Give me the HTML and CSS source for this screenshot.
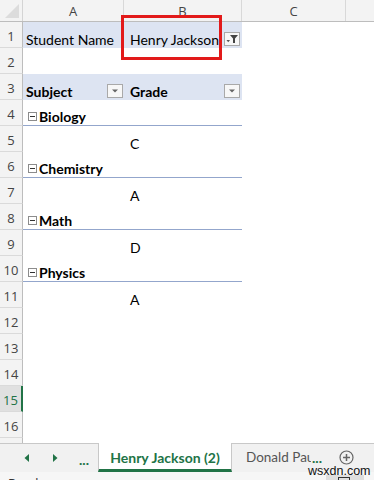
FILE: index.html
```html
<!DOCTYPE html>
<html>
<head>
<meta charset="utf-8">
<link rel="stylesheet" href="styles.css">
</head>
<body>
<div class="app">
  <div class="grid">
    <div class="row colhead">
      <div class="corner"><span class="tri"></span></div>
      <div class="ch">A</div>
      <div class="ch">B</div>
      <div class="ch">C</div>
      <div class="ch last"></div>
    </div>

    <div class="row">
      <div class="rh">1</div>
      <div class="c pv a">Student Name</div>
      <div class="c pv b">Henry Jackson
        <span class="fbtn"><svg width="14" height="12" viewBox="0 0 14 12"><polygon points="1.5,7 5,7 3.25,9.2" fill="#555"/><polygon points="5,2 13,2 10,5.5 10,10 8,10 8,5.5" fill="#444"/></svg></span>
      </div>
      <div class="c"></div><div class="c"></div>
    </div>

    <div class="row">
      <div class="rh">2</div>
      <div class="c"></div><div class="c"></div><div class="c"></div><div class="c"></div>
    </div>

    <div class="row">
      <div class="rh">3</div>
      <div class="c pv a bold">Subject
        <span class="fbtn"><svg width="14" height="12" viewBox="0 0 14 12"><polygon points="4,4.5 10,4.5 7,7.5" fill="#666"/></svg></span>
      </div>
      <div class="c pv b bold">Grade
        <span class="fbtn"><svg width="14" height="12" viewBox="0 0 14 12"><polygon points="4,4.5 10,4.5 7,7.5" fill="#666"/></svg></span>
      </div>
      <div class="c"></div><div class="c"></div>
    </div>

    <div class="row">
      <div class="rh">4</div>
      <div class="c item a bold"><span class="minus"></span>Biology</div>
      <div class="c item"></div>
      <div class="c"></div><div class="c"></div>
    </div>
    <div class="row">
      <div class="rh">5</div>
      <div class="c"></div><div class="c b">C</div><div class="c"></div><div class="c"></div>
    </div>

    <div class="row">
      <div class="rh">6</div>
      <div class="c item a bold"><span class="minus"></span>Chemistry</div>
      <div class="c item"></div>
      <div class="c"></div><div class="c"></div>
    </div>
    <div class="row">
      <div class="rh">7</div>
      <div class="c"></div><div class="c b">A</div><div class="c"></div><div class="c"></div>
    </div>

    <div class="row">
      <div class="rh">8</div>
      <div class="c item a bold"><span class="minus"></span>Math</div>
      <div class="c item"></div>
      <div class="c"></div><div class="c"></div>
    </div>
    <div class="row">
      <div class="rh">9</div>
      <div class="c"></div><div class="c b">D</div><div class="c"></div><div class="c"></div>
    </div>

    <div class="row">
      <div class="rh">10</div>
      <div class="c item a bold"><span class="minus"></span>Physics</div>
      <div class="c item"></div>
      <div class="c"></div><div class="c"></div>
    </div>
    <div class="row">
      <div class="rh">11</div>
      <div class="c"></div><div class="c b">A</div><div class="c"></div><div class="c"></div>
    </div>

    <div class="row"><div class="rh">12</div><div class="c"></div><div class="c"></div><div class="c"></div><div class="c"></div></div>
    <div class="row"><div class="rh">13</div><div class="c"></div><div class="c"></div><div class="c"></div><div class="c"></div></div>
    <div class="row"><div class="rh">14</div><div class="c"></div><div class="c"></div><div class="c"></div><div class="c"></div></div>
    <div class="row"><div class="rh sel">15</div><div class="c"></div><div class="c"></div><div class="c"></div><div class="c"></div></div>
    <div class="row"><div class="rh">16</div><div class="c"></div><div class="c"></div><div class="c"></div><div class="c"></div></div>
    <div class="row"><div class="rh">17</div><div class="c"></div><div class="c"></div><div class="c"></div><div class="c"></div></div>
  </div>

  <div class="tabs">
    <div class="nav">
      <svg width="8" height="10" viewBox="0 0 8 10" class="arr"><polygon points="6,1 6,9 1.5,5" fill="#217346"/></svg>
      <svg width="8" height="10" viewBox="0 0 8 10" class="arr"><polygon points="2,1 2,9 6.5,5" fill="#217346"/></svg>
      <span class="dots">...</span>
    </div>
    <div class="tab active">Henry Jackson (2)</div>
    <div class="tab other">Donald Paul</div>
    <span class="dots2">...</span>
    <span class="plus"><svg width="15" height="15" viewBox="0 0 15 15"><circle cx="7.5" cy="7.5" r="6.5" fill="none" stroke="#666" stroke-width="1.2"/><path d="M7.5 4v7M4 7.5h7" stroke="#666" stroke-width="1.5"/></svg></span>
  </div>
  <div class="status"><span class="ready">Ready</span><span class="sbox"><span class="sicon"></span></span></div>

  <div class="redbox"></div>
  <div class="watermark">wsxdn.com</div>
</div>
</body>
</html>
```

FILE: styles.css
```css
* { box-sizing: border-box; }
html, body { margin: 0; padding: 0; background: #fff; }
.app {
  position: relative;
  width: 374px;
  height: 480px;
  overflow: hidden;
  font-family: Lato, "Open Sans", sans-serif;
  color: #000;
}
.grid {
  height: 443px;
  overflow: hidden;
}
.row {
  display: grid;
  grid-template-columns: 23px 101px 118px 104px 1fr;
  height: 26px;
}
.colhead {
  height: 22px;
  background: #f3f3f3;
  border-bottom: 1px solid #bdbdbd;
}
.corner {
  position: relative;
  border-right: 1px solid #d4d4d4;
}
.tri {
  position: absolute;
  right: 3px;
  bottom: 3px;
  width: 0;
  height: 0;
  border-left: 14px solid transparent;
  border-bottom: 14px solid #dcdcdc;
}
.ch {
  font-family: "Open Sans", sans-serif;
  font-size: 13px;
  color: #444;
  display: flex;
  align-items: center;
  justify-content: center;
  border-right: 1px solid #d8d8d8;
}
.ch.last { border-right: none; }
.rh {
  font-family: "Open Sans", sans-serif;
  font-size: 13px;
  color: #444;
  background: #f3f3f3;
  border-right: 1px solid #bdbdbd;
  border-bottom: 1px solid #dadada;
  display: flex;
  align-items: flex-end;
  justify-content: center;
  padding-bottom: 2px;
  line-height: 18px;
}
.rh.sel {
  background: #e0e0e0;
  color: #217346;
  border-right: 2px solid #217346;
}
.c {
  position: relative;
  font-size: 14px;
  line-height: 16px;
  display: flex;
  align-items: flex-end;
  padding-bottom: 0;
  white-space: nowrap;
}
.c.a { padding-left: 3px; }
.c.b { padding-left: 6px; }
.pv { background: #dde4f2; }
.bold { font-weight: bold; }
.item { border-bottom: 1px solid #93a6cc; }
.minus {
  display: inline-block;
  position: relative;
  flex: none;
  width: 9px;
  height: 9px;
  border: 1px solid #8c8c8c;
  background: #fff;
  margin: 0 2px 4px 2px;
}
.minus::after {
  content: "";
  position: absolute;
  left: 1px;
  right: 1px;
  top: 3px;
  height: 1px;
  background: #333;
}
.fbtn {
  position: absolute;
  right: 2px;
  bottom: 2px;
  width: 16px;
  height: 14px;
  border: 1px solid #a9a9a9;
  background: #f7f7f7;
  display: flex;
  align-items: center;
  justify-content: center;
}
.a .fbtn { right: 1px; }

.tabs {
  height: 29px;
  background: #f1f1f1;
  border-top: 1px solid #c8c8c8;
  display: flex;
  align-items: stretch;
  font-size: 14px;
}
.nav {
  width: 98px;
  display: flex;
  align-items: center;
  padding-left: 23px;
}
.arr { margin-right: 20px; }
.dots {
  color: #217346;
  font-weight: bold;
  font-size: 14px;
  margin-top: 2px;
}
.tab {
  display: flex;
  align-items: center;
  white-space: nowrap;
  overflow: hidden;
}
.tab.active {
  width: 134px;
  justify-content: center;
  background: #fff;
  color: #217346;
  font-weight: bold;
  border-left: 1px solid #c8c8c8;
  border-right: 1px solid #c8c8c8;
  border-bottom: 3px solid #217346;
  margin-top: -1px;
  padding-top: 2px;
}
.tab.other {
  width: 79px;
  padding-left: 14px;
  color: #555;
  font-size: 13.5px;
  padding-bottom: 2px;
}
.dots2 {
  display: flex;
  align-items: center;
  color: #217346;
  font-weight: bold;
  margin-left: 1px;
  padding-bottom: 2px;
}
.plus {
  display: flex;
  align-items: center;
  margin-left: 17px;
  padding-bottom: 2px;
}
.status {
  height: 10px;
  background: #f6f6f6;
  position: relative;
  font-family: "Open Sans", sans-serif;
  font-size: 13px;
}
.ready {
  position: absolute;
  left: 8px;
  top: 3px;
  color: #333;
  line-height: 16px;
}
.sbox {
  position: absolute;
  left: 326px;
  top: 3px;
  width: 38px;
  height: 10px;
  background: #dedede;
}
.sicon {
  position: absolute;
  left: 12px;
  top: 2px;
  width: 12px;
  height: 10px;
  border: 1px solid #333;
}
.redbox {
  position: absolute;
  left: 121px;
  top: 15px;
  width: 101px;
  height: 45px;
  border: 3px solid #e21a1a;
}
.watermark {
  position: absolute;
  left: 308px;
  top: 464px;
  font-family: "Liberation Sans", sans-serif;
  font-size: 12.5px;
  color: #111;
  line-height: 14px;
}
```
